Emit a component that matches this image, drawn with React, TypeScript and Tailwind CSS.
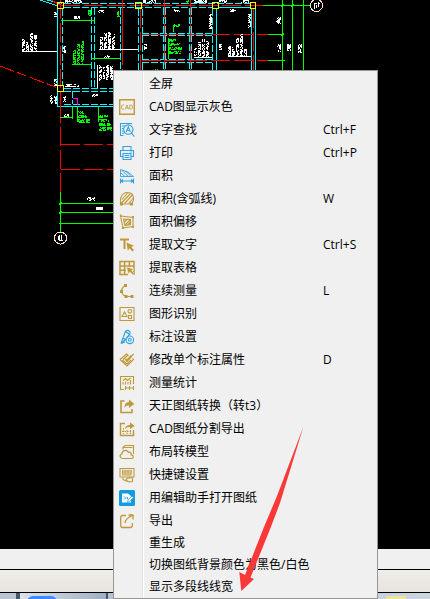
import type { ReactNode } from 'react';

const GOLD = '#bf9838';
const BLUE = '#2fa2e2';

interface MenuEntry {
  label: string;
  shortcut?: string;
  icon?: ReactNode;
  color?: string;
}

interface NoteProps {
  x: number;
  y: number;
  w: number;
  h: number;
  color?: string;
}

// Illegible drawing annotation, one clump of pixels
function Note({ x, y, w, h, color = '#fff' }: NoteProps) {
  let seed = x * 31 + y * 17 + w * 7 + h;
  const next = () => {
    seed = (seed * 1103 + 12345) % 65521;
    return seed / 65521;
  };
  const cells: string[] = [];
  for (let i = 0; i < w; i++) {
    for (let j = 0; j < h; j++) {
      if (next() < 0.66) cells.push(`M${x + i} ${y + j}h1v1h-1z`);
    }
  }
  return <path d={cells.join('')} fill={color} stroke="none" />;
}

// Several lines of rotated text standing on a common base line
function NoteBlock({ x, base, heights, color }: { x: number; base: number; heights: number[]; color?: string }) {
  return (
    <>
      {heights.map((h, i) => (
        <Note key={i} x={x + i * 4} y={base - h} w={3} h={h} color={color} />
      ))}
    </>
  );
}

function Drawing() {
  return (
    <svg width="430" height="260" viewBox="0 0 430 260" fill="none" shapeRendering="crispEdges" aria-hidden="true">
      <g stroke="#00ffff">
        <path d="M57.5 9V107M57 106.5H114M216.5 9V71M251.5 9V71M255.5 9V71M219 7.5H251" />
        <path
          strokeDasharray="7 2"
          d="M64 3.5H251M64 7.5H213M62.5 9V86M91.5 8V88M94.5 8V88M120.5 8V71M138.5 9V71M142.5 9V71M163.5 8V71M165.5 8V71M189.5 8V71M191.5 8V71M212.5 9V71M142 33.5H213M142 35.5H213M142 59.5H213M142 62.5H213M64 88.5H114M64 91.5H114M64 104.5H114M72.5 91V104"
        />
        <path d="M40 0L58 6M47 0L62 4" />
      </g>
      <g stroke="#ff0000">
        <path strokeDasharray="19 4" d="M61 5.5H263M60.5 0V107M122.5 0V71M140.5 9V71M164.5 0V71M190.5 0V71M253.5 9V71" />
        <path strokeDasharray="19 4" d="M142 34.5H268M142 60.5H268M61 144.5H114M61 169.5H114M60.5 104V192" />
        <path strokeDasharray="15 3 10 4" d="M0 66L58 88" />
        <path d="M51 0L60 5M122.5 9V60" />
      </g>
      <g stroke="#00ff00">
        <path d="M263 5.5H311M282.5 0V71M292.5 0V71M303.5 0V71M268 34.5H284M268 60.5H285" />
        <path d="M61 20.5H95M72 64.5H91M91 58.5H121M60 117.5H73M72.5 107V119M77.5 107V122M98.5 107V122M173.5 25V32M168.5 38V59" />
        <path d="M60.5 192V232M59 203.5H114M59 212.5H114M59 223.5H114" />
        <path d="M281 7l3-3M291 7l3-3M281 36l3-3M59 205l3-3M59 214l3-3" />
      </g>
      <path stroke="#ff00ff" d="M73 98.5H77.5V105" />
      <path stroke="#fff" d="M22 51.5H57M99 49.5H138M97.5 65V88M194 57.5H212M228 56.5H251" />

      <NoteBlock x={22} base={51} heights={[12, 9, 18, 16]} />
      <NoteBlock x={100} base={49} heights={[12, 16, 17, 15]} />
      <NoteBlock x={194} base={57} heights={[9, 15, 18, 16]} />
      <NoteBlock x={228} base={56} heights={[10, 9, 18, 22, 7]} />
      <Note x={99} y={65} w={3} h={16} />
      <Note x={103} y={67} w={2} h={12} />
      <Note x={106} y={65} w={3} h={16} />
      <Note x={110} y={66} w={3} h={14} />
      <Note x={54} y={10} w={3} h={7} />
      <Note x={63} y={46} w={3} h={7} />
      <Note x={54} y={79} w={3} h={7} />
      <Note x={50} y={95} w={3} h={9} />
      <Note x={54} y={96} w={3} h={8} />
      <Note x={63} y={96} w={3} h={6} />
      <Note x={74} y={16} w={6} h={3} />
      <Note x={65} y={84} w={14} h={3} />
      <Note x={65} y={0} w={17} h={3} />
      <Note x={92} y={94} w={7} h={3} />
      <Note x={64} y={114} w={5} h={3} />
      <Note x={98} y={10} w={6} h={3} />
      <Note x={104} y={55} w={6} h={3} />
      <Note x={143} y={0} w={13} h={3} />
      <Note x={144} y={44} w={3} h={6} />
      <Note x={173} y={9} w={7} h={3} />
      <Note x={209} y={14} w={3} h={15} />
      <Note x={194} y={0} w={13} h={3} />
      <Note x={219} y={0} w={8} h={3} />
      <Note x={241} y={0} w={8} h={3} />
      <Note x={230} y={9} w={6} h={3} />
      <Note x={219} y={44} w={3} h={6} />
      <Note x={248} y={14} w={3} h={14} />
      <Note x={276} y={17} w={5} h={7} />
      <Note x={277} y={44} w={4} h={8} />
      <Note x={287} y={44} w={4} h={7} />
      <Note x={298} y={44} w={4} h={9} />
      <Note x={87} y={197} w={8} h={4} />
      <rect x="96" y="207" width="7" height="3" fill="#fff" />

      <NoteBlock x={73} base={64} heights={[15, 20, 23]} color="#00ff00" />
      <Note x={88} y={10} w={3} h={6} color="#00ff00" />
      <Note x={117} y={11} w={3} h={6} color="#00ff00" />
      <Note x={78} y={111} w={6} h={3} color="#00ff00" />
      <Note x={78} y={115} w={9} h={3} color="#00ff00" />
      <Note x={78} y={119} w={12} h={4} color="#00ff00" />
      <Note x={99} y={115} w={9} h={3} color="#00ff00" />
      <Note x={99} y={119} w={11} h={3} color="#00ff00" />
      <Note x={99} y={123} w={12} h={3} color="#00ff00" />
      <Note x={99} y={127} w={13} h={4} color="#00ff00" />
      <Note x={174} y={24} w={6} h={3} color="#00ff00" />
      <Note x={169} y={39} w={7} h={3} color="#00ff00" />
      <Note x={169} y={43} w={11} h={3} color="#00ff00" />
      <Note x={169} y={47} w={13} h={3} color="#00ff00" />
      <Note x={169} y={51} w={12} h={3} color="#00ff00" />
      <Note x={155} y={69} w={3} h={2} color="#00ff00" />
      <Note x={186} y={0} w={3} h={4} color="#00ff00" />

      <g stroke="#ffff00">
        <rect x="57.5" y="2.5" width="6" height="6" />
        <rect x="135.5" y="2.5" width="6" height="6" />
        <rect x="212.5" y="2.5" width="6" height="6" />
        <rect x="250.5" y="2.5" width="5" height="6" />
        <rect x="57.5" y="85.5" width="6" height="6" />
      </g>
      <g stroke="#ffdfbf">
        <circle cx="316.5" cy="5.5" r="6" fill="#000" />
        <circle cx="60.5" cy="238" r="6" fill="#000" />
      </g>
      <path stroke="#fff" d="M314.5 3v6M318.5 2v5M315 3.5h2M318 3.5h2M316.5 5v3M58.5 236v4M59.5 235v6M61.5 235v5M59 240.5h4" />
    </svg>
  );
}

const cadIcon = (
  <>
    <path d="M.7.7h14.6v14.6H.7z" strokeWidth="1.4" />
    <path d="M5.2 6H3.1L2.6 6.6v3l.5.5h2.1M6.2 10.2 8 6l1.6 4.2M7 9h2M10.8 6v4.1h1.8l.8-.8V6.8l-.8-.8z" strokeWidth=".8" />
  </>
);

const findIcon = (
  <>
    <path d="M12.5 2V1.5h-11v12h3M1 13.5h3M3 4h3M3 6.5h1.5M3 9h1M3 11.3h2" />
    <circle cx="9.3" cy="7.6" r="4.7" />
    <path d="M7.2 10 9.3 4.8l2.1 5.2M8 8.5h2.7M12.5 11l2.8 3.6" />
  </>
);

const printIcon = (
  <path d="M4 5V1.5h8V5M3.5 11.5h-2V5.5h13v6h-2M4 8.5h8v6H4zM5.5 10.5h5M5.5 12.5h5M11.5 7h1.5" />
);

const areaIcon = (
  <>
    <path d="M1.5 1.5v7h13L9 4z" strokeWidth=".9" />
    <path d="M2 5l4 3.5M3 2.5l6.5 6M6.5 3l5.5 5.5" strokeWidth=".9" />
    <path d="M1.5 10.5v5M14.5 10.5v5M2 13h12M4 11.5 2 13l2 1.5M12 11.5l2 1.5-2 1.5" />
  </>
);

const arcAreaIcon = (
  <>
    <path d="M2 6C4 2 8 .5 12.5 2.5c3 3 2.5 7 0 10.5H2.5C1 11 1.5 8 2 6z" />
    <path d="M3 8.5 8.5 2M2.5 12 11.5 2.5M5.5 12.5 13.5 4M9.5 12.5 14 7.5" />
    <path d="M1.5 12h2v2h-2zM11.5 12h2v2h-2z" fill={GOLD} />
  </>
);

const offsetIcon = (
  <>
    <path d="M1.5 2 14 3.5v9L4 14z" />
    <path d="M4.5 5 11.5 5.5v5L6 11.5zM5 8.5 8 5.5M6 11l5-5M8.5 11l3-3" />
    <path d="M1 1.5h1.5M13 3h2M13 13h2M3 14h2" strokeWidth="2" />
  </>
);

const pickTextIcon = (
  <>
    <path d="M1 2.5h9M5.5 2.5V12" strokeWidth="2" />
    <path d="M7.5 5.5 15 8.8l-2.7 1.1 2.7 3.3-1.6 1.4-2.8-3.3-1.8 2.4z" fill={GOLD} stroke="none" />
  </>
);

const pickTableIcon = (
  <>
    <path d="M15 15V1.5H1v13h8M1 6h14M1 10.2h6M5.6 1.5v13M10.4 1.5V6" strokeWidth="1.5" />
    <path d="M7.5 6.8 15 9.5l-2.3 1.1 2.5 3-1.4 1.3-2.7-3-1.7 2.2z" fill={GOLD} stroke="#f0f0f0" strokeWidth=".5" />
  </>
);

const measureIcon = (
  <>
    <path d="M5.5 3C2 5.5 1.5 9 4.5 12l2.5 1.5h6" strokeWidth="1.2" />
    <path d="M5 1h3v3H5zM1 7h3v3H1zM5.5 12H8.5v3H5.5zM11.5 12h3v3h-3z" fill={GOLD} stroke="none" />
  </>
);

const shapesIcon = (
  <>
    <path d="M1 1.5h14v13H1z" />
    <path d="M3 10.5 5.5 6 8 10.5z" />
    <circle cx="10.8" cy="5.3" r="1.8" />
    <path d="M9.5 9.5h3v3h-3z" />
  </>
);

const annotateIcon = (
  <>
    <path d="M2 14.5 6.5 2.2 9 1.2l2 1.5v2L6 11zM2 14.5l4-1.5M6.5 2.5 10 5M4 9l2.5 2" />
    <circle cx="10.8" cy="10.8" r="3.8" />
    <circle cx="10.8" cy="10.8" r="1.5" />
  </>
);

const editIcon = (
  <>
    <path d="M1 7.5 7.5 2l2 1.7M4 7.5l4.5-4M1 7.5l7 6.5 6.5-6.5-1-1M3.5 8l4.5 4 4-4" />
    <path d="M6 7l2 2.5L14.5 2M7.5 6.5 8.3 8 12 3.5" strokeWidth="1.2" />
  </>
);

const statsIcon = (
  <>
    <path d="M5 14.5H1.5v-13h13V9" />
    <path d="M4 9.5V7M6.5 9.5v-3M9 9.5V7M11.5 9.5V5M4 5.5l2.5-2 2 2 3-2.5" />
    <path d="M6.5 11v4M10.5 11v4M14.5 11v4M7 13h7" />
  </>
);

const convertIcon = (
  <>
    <path d="M5.5 3H2v11.5h11V11" strokeWidth="1.6" />
    <path d="M5.5 10C5.5 6 7 4.2 10 4.2V1.5L15.3 6 10 10V7.5C7.5 7.3 6.5 8 5.5 10z" fill={GOLD} stroke="none" />
  </>
);

const splitIcon = (
  <>
    <path d="M6 2.5H1.5v12h13V9" strokeWidth="1.4" />
    <path d="M6 8C6.5 5 8 4 11 4V1.2L15.5 5 11 8V6C8.5 5.8 7.5 6.5 6 8z" fill={GOLD} stroke="none" />
    <path d="M4.5 7v6M8 9v4M11.5 9v4M3 10.5h10" strokeDasharray="1.5 1" />
  </>
);

const layoutIcon = (
  <>
    <path d="M4 5.5V3.2L6 1.5h8.5V10M4.5 3.5h9" />
    <path d="M3.5 14.5C.5 14 .3 10.5 3 10c-.2-3.5 4.5-5 6.3-1.7 2.5-.7 3.2 1.4 2.9 2.5 3 .4 2.5 3.7.3 3.7z" fill="#f0f0f0" strokeWidth="1.2" />
  </>
);

const keyboardIcon = (
  <>
    <path d="M1 1.5h14v8.5H1zM3 4h10M3 6h10M4 8h8" />
    <path d="M3.5 2.5v6M6.2 2.5v5M9 2.5v5M12 2.5v6" strokeWidth=".8" />
    <path d="M4 10.5v2l3 1.5h2.5" />
    <path d="M7 12.5c1.5-2 4.5-2 6.5-1.5v3.5c-3 1-5 .5-6.5-2z" fill="#f0f0f0" />
  </>
);

const assistantIcon = (
  <>
    <rect width="16" height="16" rx="1.5" fill="#129bdf" stroke="none" />
    <path d="M3 3.5h6l3 2.5v6.5H3z" fill="#fff" stroke="none" />
    <path d="M4.5 7h1.2M4.5 9h1.2M6.8 7v2M8.5 7v2h1" stroke="#129bdf" strokeWidth=".8" />
    <path d="M8.5 12.5 9 10l4-4 1.5 1.5-4 4z" fill="#fff" stroke="#129bdf" strokeWidth=".7" />
  </>
);

const exportIcon = (
  <>
    <path d="M7 2.5H3L1.7 3.8v9.4L3 14.5h9l1.3-1.3V10" strokeWidth="1.3" />
    <path d="M6 10c.3-3 2.5-5.5 7.5-7.5M9.5 2h4.5v4.5" strokeWidth="1.3" />
  </>
);

const ENTRIES: MenuEntry[] = [
  { label: '全屏' },
  { label: 'CAD图显示灰色', icon: cadIcon },
  { label: '文字查找', shortcut: 'Ctrl+F', icon: findIcon, color: BLUE },
  { label: '打印', shortcut: 'Ctrl+P', icon: printIcon, color: BLUE },
  { label: '面积', icon: areaIcon, color: BLUE },
  { label: '面积(含弧线)', shortcut: 'W', icon: arcAreaIcon },
  { label: '面积偏移', icon: offsetIcon },
  { label: '提取文字', shortcut: 'Ctrl+S', icon: pickTextIcon },
  { label: '提取表格', icon: pickTableIcon },
  { label: '连续测量', shortcut: 'L', icon: measureIcon },
  { label: '图形识别', icon: shapesIcon },
  { label: '标注设置', icon: annotateIcon, color: BLUE },
  { label: '修改单个标注属性', shortcut: 'D', icon: editIcon },
  { label: '测量统计', icon: statsIcon },
  { label: '天正图纸转换（转t3）', icon: convertIcon },
  { label: 'CAD图纸分割导出', icon: splitIcon },
  { label: '布局转模型', icon: layoutIcon },
  { label: '快捷键设置', icon: keyboardIcon },
  { label: '用编辑助手打开图纸', icon: assistantIcon },
  { label: '导出', icon: exportIcon },
];

const PLAIN_ENTRIES: MenuEntry[] = [
  { label: '重生成' },
  { label: '切换图纸背景颜色为黑色/白色' },
  { label: '显示多段线线宽' },
];

function MenuRow({ entry, compact = false }: { entry: MenuEntry; compact?: boolean }) {
  return (
    <button
      type="button"
      role="menuitem"
      className={`flex w-full items-center text-left hover:bg-sky-100 ${compact ? 'h-[22px]' : 'h-[23px]'}`}
    >
      <span className="flex h-full w-[29px] shrink-0 items-center border-r border-[#e0e0e0] pl-[5px]">
        {entry.icon && (
          <svg
            width="16"
            height="16"
            viewBox="0 0 16 16"
            fill="none"
            stroke={entry.color ?? GOLD}
            strokeWidth="1.1"
            aria-hidden="true"
          >
            {entry.icon}
          </svg>
        )}
      </span>
      <span className="h-full w-px shrink-0 bg-white" />
      <span className="flex-1 whitespace-nowrap pl-[5px]">{entry.label}</span>
      {entry.shortcut && <span className="w-[54px] shrink-0">{entry.shortcut}</span>}
    </button>
  );
}

function ContextMenu() {
  return (
    <div
      role="menu"
      className="absolute left-[113px] top-[70px] w-[265px] border border-[#979797] bg-[#f0f0f0] pt-px text-[12px] leading-[16px] text-black"
    >
      {ENTRIES.map((entry) => (
        <MenuRow key={entry.label} entry={entry} />
      ))}
      {PLAIN_ENTRIES.map((entry) => (
        <MenuRow key={entry.label} entry={entry} compact />
      ))}
    </div>
  );
}

function Taskbar() {
  return (
    <div className="flex h-[6px] shrink-0 overflow-hidden bg-gradient-to-r from-[#aebccd] to-[#cbd5e1]">
      <div className="w-[18px] border-r-2 border-[#42586c] bg-[#b7c4d4]" />
      <div className="flex w-[90px] border-x-2 border-[#42586c] bg-gradient-to-r from-[#dbe2ea] to-[#9fb0c5] pl-[7px] pt-[3px]">
        <div className="h-4 w-[30px] rounded-t-md bg-[#3d8bff]" />
      </div>
      <div className="flex flex-1 justify-end pr-[24px] pt-[3px]">
        <div className="h-2 w-[20px] bg-[#eee29c]" />
      </div>
    </div>
  );
}

export default function App() {
  return (
    <main className="relative flex h-screen flex-col overflow-hidden bg-black font-['Open_Sans','Noto_Sans_CJK_SC',sans-serif]">
      <div className="min-h-0 flex-1 overflow-hidden bg-black">
        <Drawing />
      </div>
      <div className="h-5 shrink-0 bg-[#f0f0f0]" />
      <div className="h-[24px] shrink-0 border-y border-black bg-gradient-to-b from-[#eeeee9] to-[#e8e3de]" />
      <Taskbar />
      <ContextMenu />
      <svg
        className="pointer-events-none absolute left-[238px] top-[426px]"
        width="68"
        height="168"
        viewBox="238 426 68 168"
        aria-hidden="true"
      >
        <path d="M303.5 426.5 280 503 270.5 528 250.5 577.5 254 579 241.3 591 239.3 572 245 575 264 527 277 496z" fill="#fb3838" />
      </svg>
    </main>
  );
}
